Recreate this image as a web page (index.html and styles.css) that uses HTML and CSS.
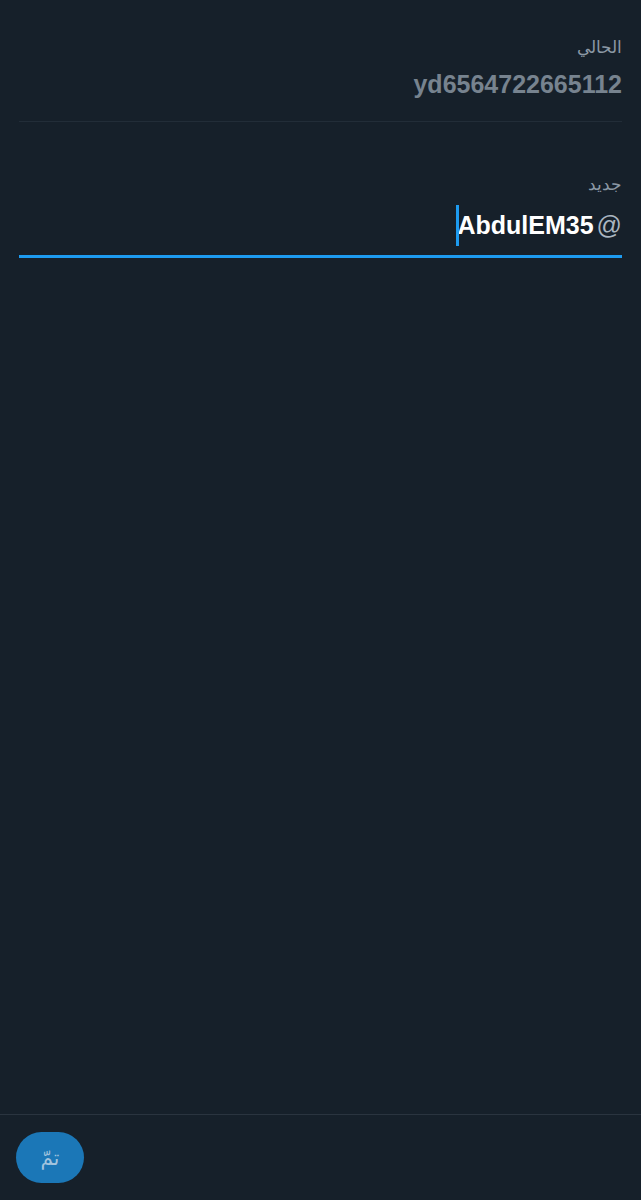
FILE: index.html
```html
<!DOCTYPE html>
<html lang="ar" dir="rtl">
<head>
<meta charset="utf-8">
<link rel="stylesheet" href="styles.css">
</head>
<body>
<div class="page">
  <main class="form">
    <section class="field field-current">
      <div class="label">الحالي</div>
      <div class="value current">yd6564722665112</div>
    </section>
    <section class="field field-new">
      <div class="label">جديد</div>
      <div class="value input"><span class="at">@</span><span class="name">AbdulEM35</span><span class="caret"></span></div>
    </section>
  </main>
  <footer class="bar">
    <button class="done">تمّ</button>
  </footer>
</div>
</body>
</html>
```
FILE: styles.css
```css
*, *::before, *::after {
  box-sizing: border-box;
}
html, body {
  margin: 0;
  padding: 0;
  background: #16202a;
}
body {
  font-family: "Liberation Sans", Arial, "Noto Sans", sans-serif;
  color: #e7e9ea;
}
.page {
  height: 1200px;
  display: flex;
  flex-direction: column;
}
.form {
  flex: 1;
  padding: 0 19px;
  display: flex;
  flex-direction: column;
}
.field {
  display: flex;
  flex-direction: column;
}
.field-current {
  padding-top: 38px;
  padding-bottom: 22px;
  border-bottom: 1px solid #222d38;
}
.field-new {
  padding-top: 53px;
  padding-bottom: 10px;
  border-bottom: 3px solid #1d9bf0;
}
.label {
  font-size: 17px;
  line-height: 20px;
  color: #8b98a5;
}
.value {
  font-size: 25px;
  font-weight: bold;
  line-height: 30px;
  margin-top: 11px;
}
.current {
  color: #77838f;
}
.input {
  display: flex;
  align-items: center;
  margin-top: 10px;
  height: 40px;
}
.at {
  color: #aab6c1;
  font-weight: normal;
  margin-left: 3px;
}
.name {
  color: #ffffff;
}
.caret {
  width: 3px;
  height: 41px;
  background: #1d9bf0;
  margin-right: -2px;
}
.bar {
  height: 86px;
  border-top: 1px solid #2a343f;
  display: flex;
  align-items: flex-start;
  padding: 17px 16px 0;
}
.done {
  margin-right: auto;
  width: 68px;
  height: 51px;
  border: none;
  border-radius: 26px;
  background: #1b77b7;
  color: #a3c4de;
  font-family: "Noto Sans", "DejaVu Sans", sans-serif;
  font-size: 20px;
  line-height: 1;
  padding: 0;
}
```
